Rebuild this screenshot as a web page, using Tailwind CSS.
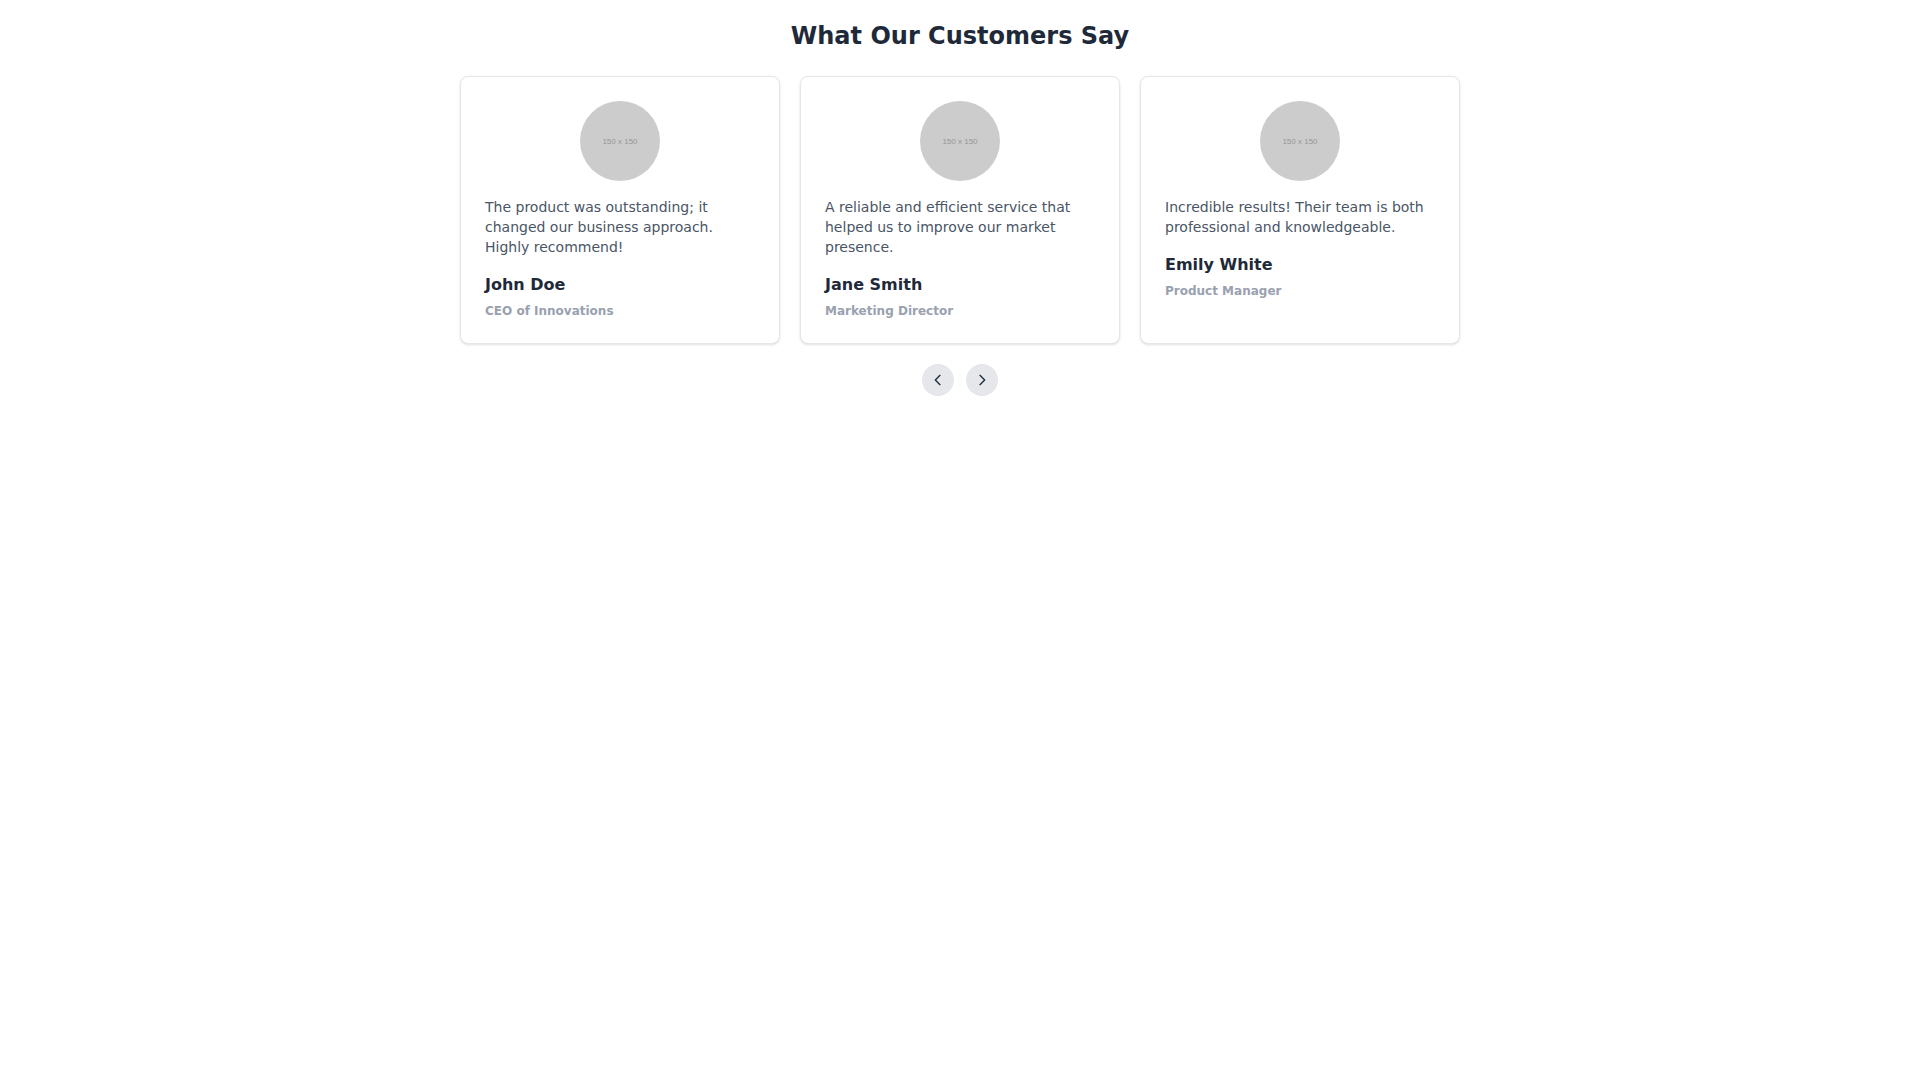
<!DOCTYPE html>
<html lang="en">

<head>
    <meta charset="UTF-8">
    <title>Testimonials</title>
    <script src="https://cdn.jsdelivr.net/npm/@tailwindcss/browser@4"></script>
</head>

<body class="bg-white min-h-screen font-['DejaVu_Sans',sans-serif]">
    <section class="pt-5 flex flex-col items-center">
        <h2 class="text-2xl font-bold text-gray-800 text-center mb-6">What Our Customers Say</h2>
        <div class="flex items-stretch gap-5">
            <div class="w-80 border border-gray-200 rounded-lg shadow-sm bg-white p-6">
                <div class="w-20 h-20 rounded-full bg-[#cccccc] mx-auto mb-4 flex items-center justify-center">
                    <span class="text-[8px] text-[#969696] leading-none mt-0.5 font-['Liberation_Sans',sans-serif]">150 x 150</span>
                </div>
                <p class="text-sm text-gray-600">The product was outstanding; it changed our business approach. Highly recommend!</p>
                <h3 class="mt-4 font-bold text-gray-800">John Doe</h3>
                <p class="mt-1.5 text-xs font-semibold text-gray-400">CEO of Innovations</p>
            </div>
            <div class="w-80 border border-gray-200 rounded-lg shadow-sm bg-white p-6">
                <div class="w-20 h-20 rounded-full bg-[#cccccc] mx-auto mb-4 flex items-center justify-center">
                    <span class="text-[8px] text-[#969696] leading-none mt-0.5 font-['Liberation_Sans',sans-serif]">150 x 150</span>
                </div>
                <p class="text-sm text-gray-600">A reliable and efficient service that helped us to improve our market presence.</p>
                <h3 class="mt-4 font-bold text-gray-800">Jane Smith</h3>
                <p class="mt-1.5 text-xs font-semibold text-gray-400">Marketing Director</p>
            </div>
            <div class="w-80 border border-gray-200 rounded-lg shadow-sm bg-white p-6">
                <div class="w-20 h-20 rounded-full bg-[#cccccc] mx-auto mb-4 flex items-center justify-center">
                    <span class="text-[8px] text-[#969696] leading-none mt-0.5 font-['Liberation_Sans',sans-serif]">150 x 150</span>
                </div>
                <p class="text-sm text-gray-600">Incredible results! Their team is both professional and knowledgeable.</p>
                <h3 class="mt-4 font-bold text-gray-800">Emily White</h3>
                <p class="mt-1.5 text-xs font-semibold text-gray-400">Product Manager</p>
            </div>
        </div>
        <div class="flex gap-3 mt-5">
            <button class="w-8 h-8 rounded-full bg-gray-200 flex items-center justify-center">
                <svg class="w-4 h-4 text-gray-800" fill="none" stroke="currentColor" stroke-width="2" viewBox="0 0 24 24"><path stroke-linecap="round" stroke-linejoin="round" d="M15 19l-7-7 7-7"></path></svg>
            </button>
            <button class="w-8 h-8 rounded-full bg-gray-200 flex items-center justify-center">
                <svg class="w-4 h-4 text-gray-800" fill="none" stroke="currentColor" stroke-width="2" viewBox="0 0 24 24"><path stroke-linecap="round" stroke-linejoin="round" d="M9 5l7 7-7 7"></path></svg>
            </button>
        </div>
    </section>
</body>

</html>
